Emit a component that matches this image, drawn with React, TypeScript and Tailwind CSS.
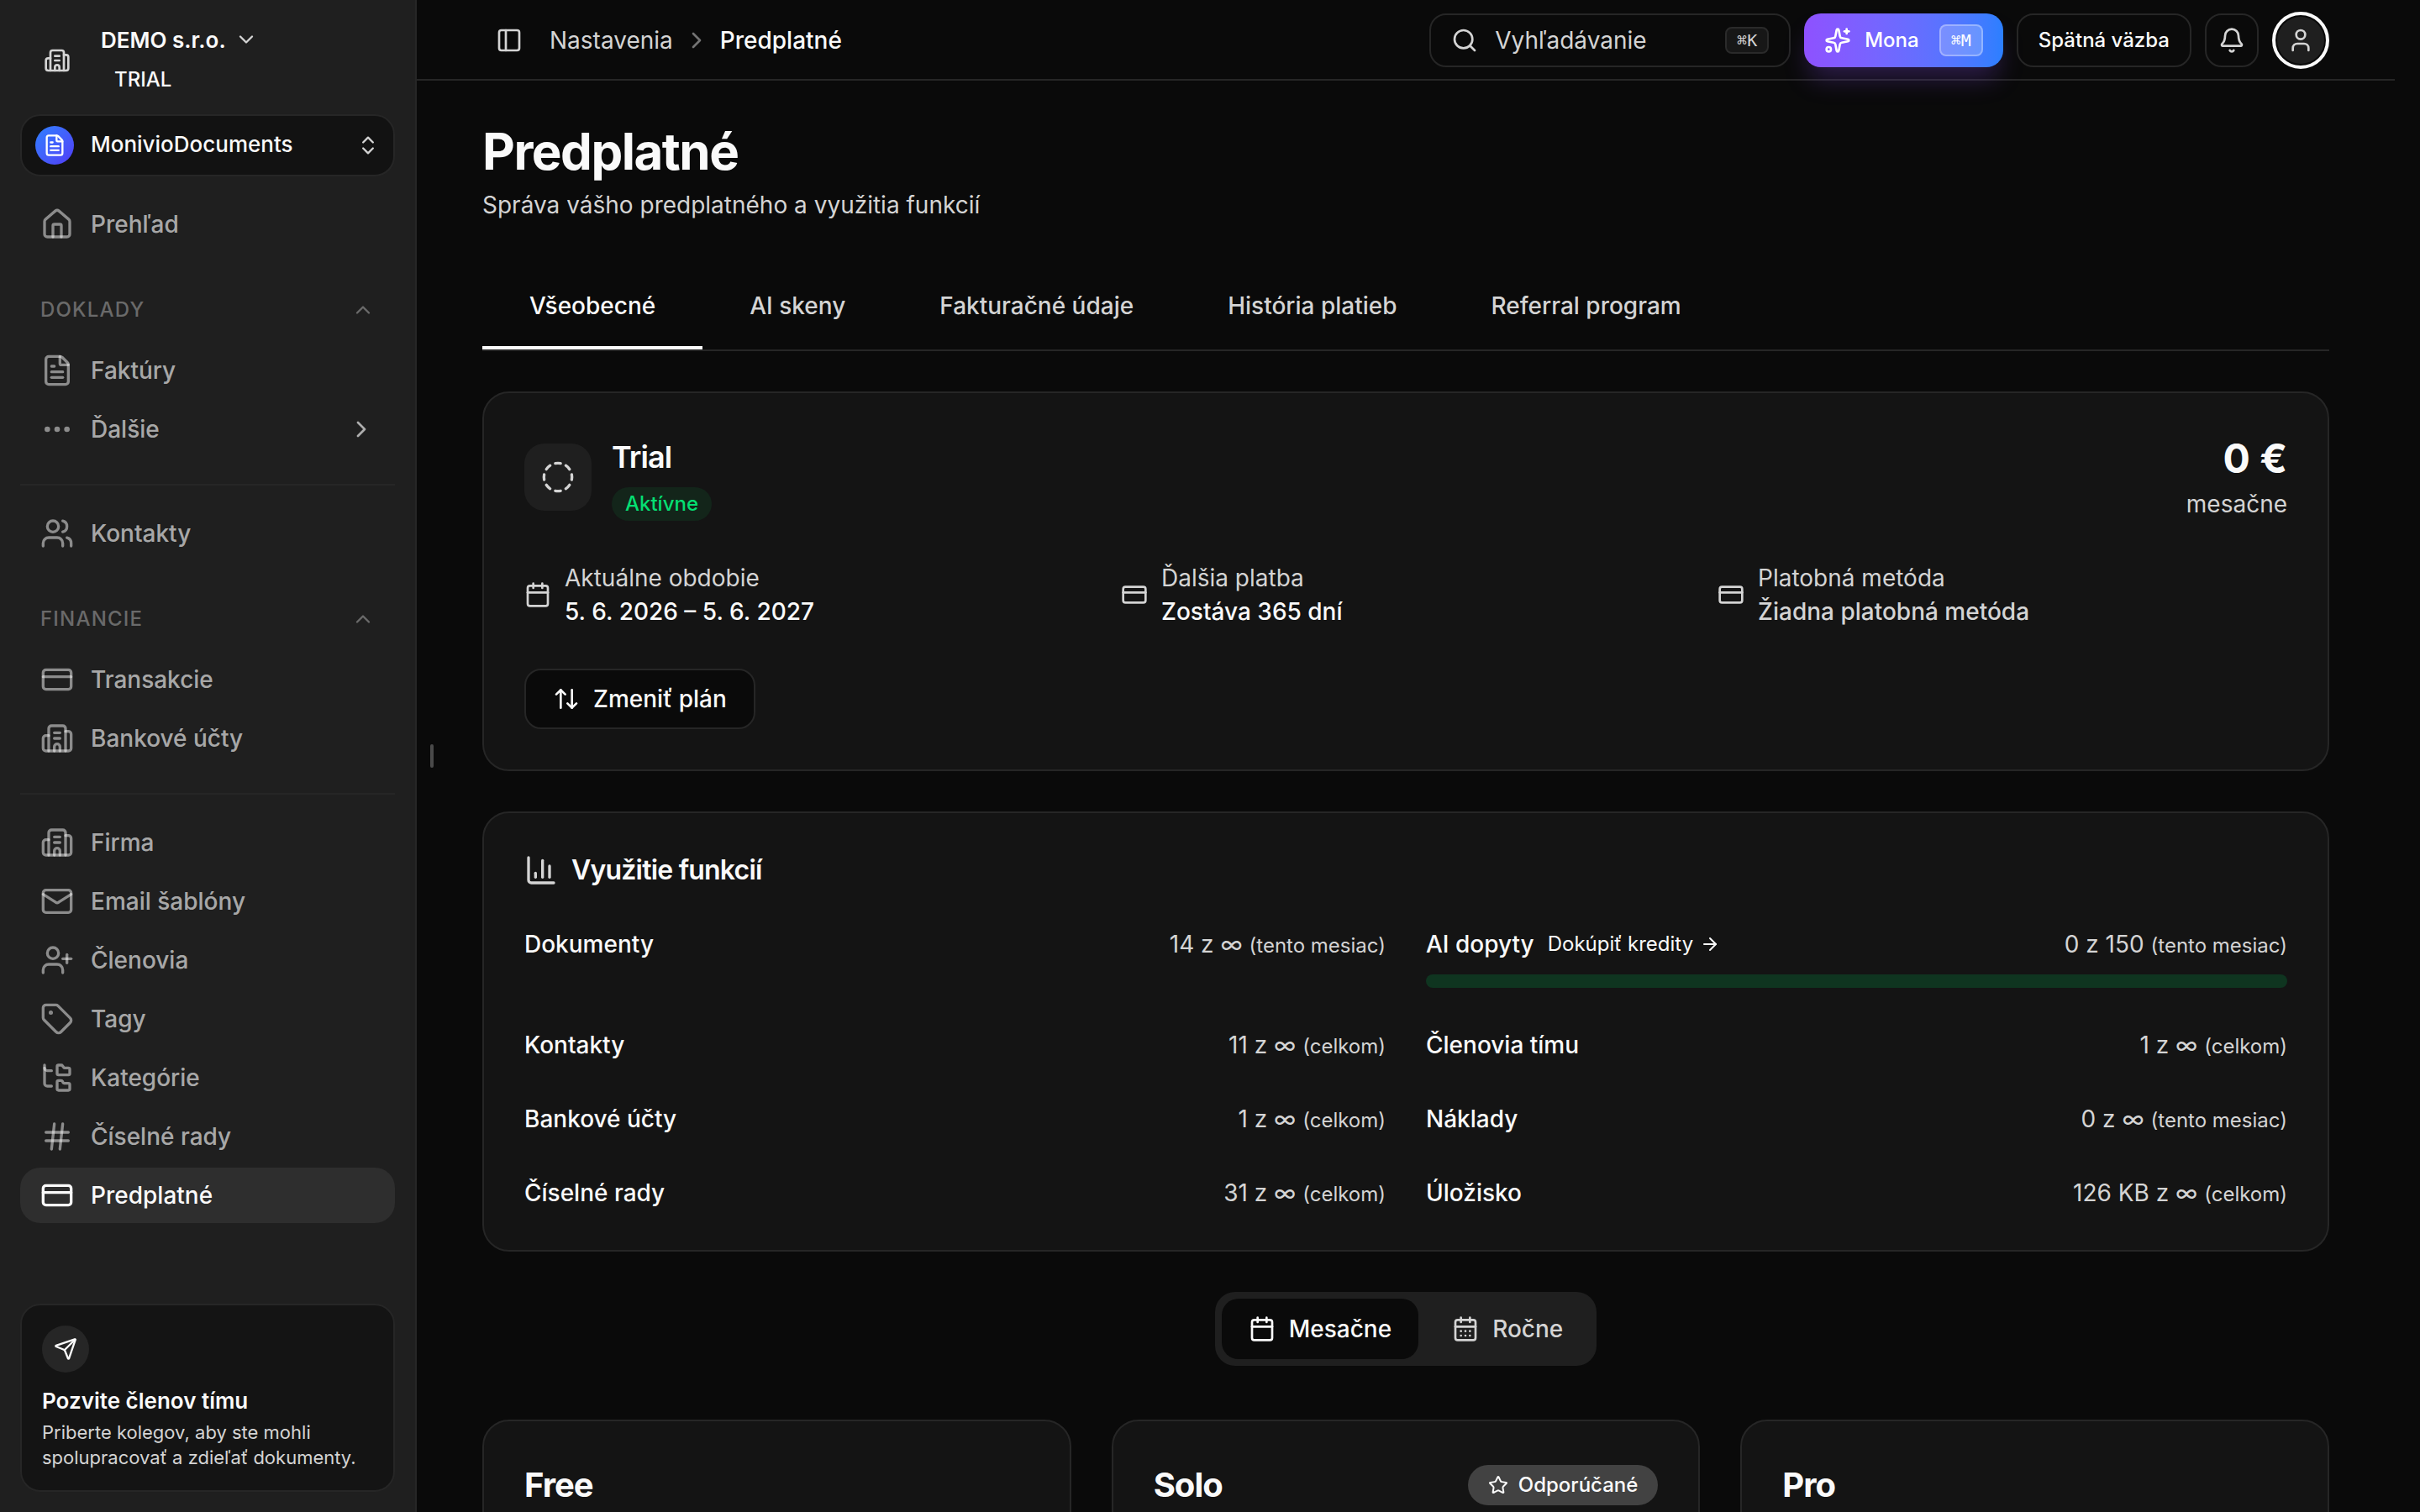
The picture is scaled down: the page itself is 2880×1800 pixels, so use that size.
import { useState } from "react";
import type { ReactNode } from "react";
import {
  ArrowRight,
  ArrowUpDown,
  Bell,
  Building2,
  Calendar,
  CalendarDays,
  ChartColumn,
  ChevronDown,
  ChevronRight,
  ChevronsUpDown,
  ChevronUp,
  CircleDashed,
  CreditCard,
  Ellipsis,
  FileText,
  FolderTree,
  Hash,
  House,
  Mail,
  PanelLeft,
  Search,
  Send,
  Sparkles,
  Star,
  Tag,
  User,
  UserPlus,
  Users,
} from "lucide-react";
import type { LucideIcon } from "lucide-react";
import clsx from "clsx";

interface NavItem {
  label: string;
  icon: LucideIcon;
  active?: boolean;
  expandable?: boolean;
}

interface UsageItem {
  label: string;
  value: string;
  period: string;
  link?: string;
  progress?: number;
}

const OVERVIEW: NavItem[] = [{ label: "Prehľad", icon: House }];

const DOCUMENTS: NavItem[] = [
  { label: "Faktúry", icon: FileText },
  { label: "Ďalšie", icon: Ellipsis, expandable: true },
];

const CONTACTS: NavItem[] = [{ label: "Kontakty", icon: Users }];

const FINANCE: NavItem[] = [
  { label: "Transakcie", icon: CreditCard },
  { label: "Bankové účty", icon: Building2 },
];

const SETTINGS: NavItem[] = [
  { label: "Firma", icon: Building2 },
  { label: "Email šablóny", icon: Mail },
  { label: "Členovia", icon: UserPlus },
  { label: "Tagy", icon: Tag },
  { label: "Kategórie", icon: FolderTree },
  { label: "Číselné rady", icon: Hash },
  { label: "Predplatné", icon: CreditCard, active: true },
];

const TABS = [
  "Všeobecné",
  "AI skeny",
  "Fakturačné údaje",
  "História platieb",
  "Referral program",
];

const DETAILS = [
  { label: "Aktuálne obdobie", value: "5. 6. 2026 – 5. 6. 2027", icon: Calendar },
  { label: "Ďalšia platba", value: "Zostáva 365 dní", icon: CreditCard },
  {
    label: "Platobná metóda",
    value: "Žiadna platobná metóda",
    icon: CreditCard,
    muted: true,
  },
];

const USAGE: UsageItem[] = [
  { label: "Dokumenty", value: "14 z ∞", period: "(tento mesiac)" },
  {
    label: "AI dopyty",
    value: "0 z 150",
    period: "(tento mesiac)",
    link: "Dokúpiť kredity",
    progress: 0,
  },
  { label: "Kontakty", value: "11 z ∞", period: "(celkom)" },
  { label: "Členovia tímu", value: "1 z ∞", period: "(celkom)" },
  { label: "Bankové účty", value: "1 z ∞", period: "(celkom)" },
  { label: "Náklady", value: "0 z ∞", period: "(tento mesiac)" },
  { label: "Číselné rady", value: "31 z ∞", period: "(celkom)" },
  { label: "Úložisko", value: "126 KB z ∞", period: "(celkom)" },
];

const PLANS = [
  { name: "Free" },
  { name: "Solo", recommended: true },
  { name: "Pro" },
];

function NavList({ items }: { items: NavItem[] }) {
  return (
    <ul className="flex flex-col gap-1">
      {items.map(({ label, icon: Icon, active, expandable }) => (
        <li key={label}>
          <a
            href="#"
            aria-current={active ? "page" : undefined}
            className={clsx(
              "flex h-[66px] items-center gap-5 rounded-3xl px-6 text-[28px] font-medium",
              active ? "bg-[#2e2e2e] text-neutral-50" : "text-neutral-50/65"
            )}
          >
            <Icon
              size={40}
              strokeWidth={2}
              className={active ? "text-neutral-50" : "text-neutral-50/50"}
            />
            <span className="flex-1">{label}</span>
            {expandable && <ChevronRight size={32} />}
          </a>
        </li>
      ))}
    </ul>
  );
}

function NavSection({ title, items }: { title: string; items: NavItem[] }) {
  return (
    <div className="mt-11">
      <button
        type="button"
        className="mb-3.5 flex h-[50px] w-full items-center justify-between px-6 text-2xl font-medium tracking-wider text-neutral-50/35"
      >
        {title}
        <ChevronUp size={28} />
      </button>
      <NavList items={items} />
    </div>
  );
}

function Sidebar() {
  return (
    <aside className="relative flex w-[496px] shrink-0 flex-col border-r-2 border-[#262626] bg-[#1f1f1f] px-6 pb-6">
      <button type="button" className="mt-6 flex items-center gap-9 pl-7 text-left">
        <Building2 size={32} className="text-neutral-300" />
        <span className="flex flex-col">
          <span className="flex h-[46px] items-center gap-2.5 text-[26px] font-semibold text-neutral-50">
            DEMO s.r.o.
            <ChevronDown size={28} className="text-neutral-300" />
          </span>
          <span className="flex h-[50px] items-center px-4 text-2xl font-medium text-neutral-50">
            TRIAL
          </span>
        </span>
      </button>

      <button
        type="button"
        className="mt-4 flex h-[74px] items-center rounded-3xl border-2 border-[#262626] bg-[#121212] px-4 text-left"
      >
        <span className="flex size-[46px] items-center justify-center rounded-full bg-linear-to-br from-[#2b7fff] to-[#4f39f6] text-white">
          <FileText size={28} />
        </span>
        <span className="ml-5 flex-1 pb-1 text-[26px] font-medium text-neutral-50">
          MonivioDocuments
        </span>
        <ChevronsUpDown size={28} className="text-neutral-300" />
      </button>

      <nav className="mt-6">
        <NavList items={OVERVIEW} />
        <NavSection title="DOKLADY" items={DOCUMENTS} />
        <hr className="mt-8 mb-6 border-t-2 border-[#262626]" />
        <NavList items={CONTACTS} />
        <NavSection title="FINANCIE" items={FINANCE} />
        <hr className="mt-8 mb-6 border-t-2 border-[#262626]" />
        <NavList items={SETTINGS} />
      </nav>

      <div className="mt-auto rounded-3xl border-2 border-[#262626] bg-[#141414] p-6">
        <div className="flex size-14 items-center justify-center rounded-full bg-[#262626] text-neutral-50">
          <Send size={28} />
        </div>
        <h2 className="mt-[18px] mb-1.5 text-[26px] leading-8 font-semibold text-neutral-50">
          Pozvite členov tímu
        </h2>
        <p className="text-[22px] leading-[30px] text-neutral-300">
          Priberte kolegov, aby ste mohli spolupracovať a zdieľať dokumenty.
        </p>
      </div>

      <div className="absolute top-1/2 left-full ml-[18px] h-7 w-1 -translate-y-1/2 rounded-full bg-[#4a4a4a]" />
    </aside>
  );
}

function Header() {
  return (
    <header className="mr-[30px] flex h-24 shrink-0 items-center border-b-2 border-[#262626] px-[78px] pt-0.5">
      <button
        type="button"
        aria-label="Bočný panel"
        className="flex size-16 items-center justify-center text-neutral-300"
      >
        <PanelLeft size={32} />
      </button>
      <nav className="ml-4 flex items-center gap-3 text-[28px]">
        <a href="#" className="text-neutral-300">
          Nastavenia
        </a>
        <ChevronRight size={32} className="text-neutral-500" />
        <span className="font-medium text-neutral-50">Predplatné</span>
      </nav>

      <div className="ml-auto flex items-center gap-4">
        <button
          type="button"
          className="flex h-16 w-[430px] items-center gap-5 rounded-[20px] border-2 border-[#262626] px-6 text-[28px] text-neutral-300"
        >
          <Search size={32} />
          <span className="flex-1 text-left">Vyhľadávanie</span>
          <kbd className="flex h-8 items-center rounded-lg border-2 border-[#2a2a2a] bg-[#171717] px-3 font-['DejaVu_Sans_Mono',monospace] text-xl">
            ⌘K
          </kbd>
        </button>
        <button
          type="button"
          className="flex h-16 items-center gap-4 rounded-[20px] bg-linear-to-r from-[#8e51ff] to-[#2b7fff] px-6 text-2xl font-medium text-white shadow-[0_20px_30px_-6px_rgba(142,81,255,0.25)]"
        >
          <Sparkles size={32} />
          Mona
          <kbd className="ml-2 flex h-[38px] items-center rounded-lg border-2 border-white/30 bg-white/20 px-3 font-['DejaVu_Sans_Mono',monospace] text-xl font-normal">
            ⌘M
          </kbd>
        </button>
        <button
          type="button"
          className="h-16 rounded-[20px] border-2 border-[#262626] px-6 text-2xl font-medium text-neutral-50"
        >
          Spätná väzba
        </button>
        <button
          type="button"
          aria-label="Upozornenia"
          className="flex size-16 items-center justify-center rounded-[20px] border-2 border-[#262626] text-neutral-300"
        >
          <Bell size={32} />
        </button>
        <button
          type="button"
          aria-label="Profil"
          className="size-[68px] rounded-full border-4 border-neutral-50 p-0.5"
        >
          <span className="flex size-full items-center justify-center rounded-full bg-[#1f1f1f] text-neutral-300">
            <User size={32} />
          </span>
        </button>
      </div>
    </header>
  );
}

function Card({ children }: { children: ReactNode }) {
  return (
    <section className="rounded-4xl border-2 border-[#262626] bg-[#141414] p-12">
      {children}
    </section>
  );
}

function PlanSummary() {
  return (
    <Card>
      <div className="flex items-center justify-between">
        <div className="flex items-center gap-6">
          <div className="flex size-20 items-center justify-center rounded-3xl bg-[#1f1f1f] text-neutral-300">
            <CircleDashed size={40} />
          </div>
          <div>
            <h2 className="mb-2 text-4xl leading-14 font-semibold tracking-tight text-neutral-50">
              Trial
            </h2>
            <span className="flex h-10 items-center rounded-full bg-[#13251a] px-4 text-2xl font-medium text-[#05df72]">
              Aktívne
            </span>
          </div>
        </div>
        <div className="flex flex-col gap-1 text-right">
          <p className="text-5xl leading-[60px] font-bold text-neutral-50">0 €</p>
          <p className="text-[28px] leading-10 text-neutral-300">mesačne</p>
        </div>
      </div>

      <dl className="mt-12 grid grid-cols-3 gap-8 text-[28px] leading-10">
        {DETAILS.map(({ label, value, icon: Icon, muted }) => (
          <div key={label} className="flex items-center gap-4">
            <Icon size={32} className="text-neutral-300" />
            <div>
              <dt className="text-neutral-300">{label}</dt>
              <dd
                className={clsx(
                  "font-medium",
                  muted ? "text-neutral-300" : "text-neutral-50"
                )}
              >
                {value}
              </dd>
            </div>
          </div>
        ))}
      </dl>

      <button
        type="button"
        className="mt-12 flex h-[72px] items-center gap-4 rounded-[20px] border-2 border-[#262626] bg-[#0a0a0a] px-8 text-[28px] font-medium text-neutral-50"
      >
        <ArrowUpDown size={32} />
        Zmeniť plán
      </button>
    </Card>
  );
}

function UsageCard() {
  return (
    <Card>
      <h2 className="flex items-center gap-4 text-[32px] leading-10 font-semibold tracking-tight text-neutral-50">
        <ChartColumn size={40} className="text-neutral-300" />
        Využitie funkcií
      </h2>
      <div className="mt-12 grid grid-cols-2 gap-12">
        {USAGE.map((item) => (
          <div key={item.label}>
            <div className="flex items-center justify-between text-[28px] leading-10">
              <div className="flex items-center gap-4">
                <span className="font-medium text-neutral-50">{item.label}</span>
                {item.link && (
                  <a
                    href="#"
                    className="flex items-center gap-2 text-2xl text-neutral-50"
                  >
                    {item.link}
                    <ArrowRight size={24} />
                  </a>
                )}
              </div>
              <span className="text-neutral-300">
                {item.value} <span className="text-2xl">{item.period}</span>
              </span>
            </div>
            {item.progress !== undefined && (
              <div className="mt-4 h-4 overflow-hidden rounded-full bg-[#0f3520]">
                <div
                  className="h-full bg-green-500"
                  style={{ width: `${item.progress}%` }}
                />
              </div>
            )}
          </div>
        ))}
      </div>
    </Card>
  );
}

function BillingToggle() {
  const [period, setPeriod] = useState("month");
  const options = [
    { id: "month", label: "Mesačne", icon: Calendar },
    { id: "year", label: "Ročne", icon: CalendarDays },
  ];

  return (
    <div className="flex gap-2 self-center rounded-3xl bg-[#1f1f1f] p-2">
      {options.map(({ id, label, icon: Icon }) => (
        <button
          key={id}
          type="button"
          aria-pressed={period === id}
          onClick={() => setPeriod(id)}
          className={clsx(
            "flex h-[72px] items-center gap-4 rounded-[20px] px-8 text-[28px] font-medium",
            period === id ? "bg-[#0a0a0a] text-neutral-50" : "text-neutral-300"
          )}
        >
          <Icon size={32} />
          {label}
        </button>
      ))}
    </div>
  );
}

export default function App() {
  const [activeTab, setActiveTab] = useState(TABS[0]);

  return (
    <div className="flex h-screen overflow-hidden bg-[#0a0a0a] font-['Inter',sans-serif] text-neutral-50">
      <Sidebar />
      <div className="flex min-w-0 flex-1 flex-col">
        <Header />
        <main className="mr-[30px] flex min-h-0 flex-1 flex-col overflow-hidden px-[78px] pt-12">
          <h1 className="text-6xl leading-[72px] font-bold tracking-tight">
            Predplatné
          </h1>
          <p className="mt-2 text-[28px] leading-10 text-neutral-300">
            Správa vášho predplatného a využitia funkcií
          </p>

          <div role="tablist" className="mt-12 flex border-b-2 border-[#262626]">
            {TABS.map((tab) => (
              <button
                key={tab}
                type="button"
                role="tab"
                aria-selected={tab === activeTab}
                onClick={() => setActiveTab(tab)}
                className={clsx(
                  "h-[104px] border-y-4 border-t-transparent px-14 text-[28px] font-medium",
                  tab === activeTab
                    ? "border-b-neutral-50 text-neutral-50"
                    : "border-b-transparent text-neutral-300"
                )}
              >
                {tab}
              </button>
            ))}
          </div>

          <div className="mt-12 flex flex-col gap-12">
            <PlanSummary />
            <UsageCard />
            <BillingToggle />
            <div className="mt-4 grid grid-cols-3 gap-12">
              {PLANS.map((plan) => (
                <Card key={plan.name}>
                  <div className="flex h-14 items-center justify-between">
                    <h3 className="text-[40px] font-bold tracking-tight">
                      {plan.name}
                    </h3>
                    {plan.recommended && (
                      <span className="flex h-12 items-center gap-3 rounded-full bg-[#424242] px-6 text-2xl font-medium">
                        <Star size={24} />
                        Odporúčané
                      </span>
                    )}
                  </div>
                </Card>
              ))}
            </div>
          </div>
        </main>
      </div>
    </div>
  );
}
